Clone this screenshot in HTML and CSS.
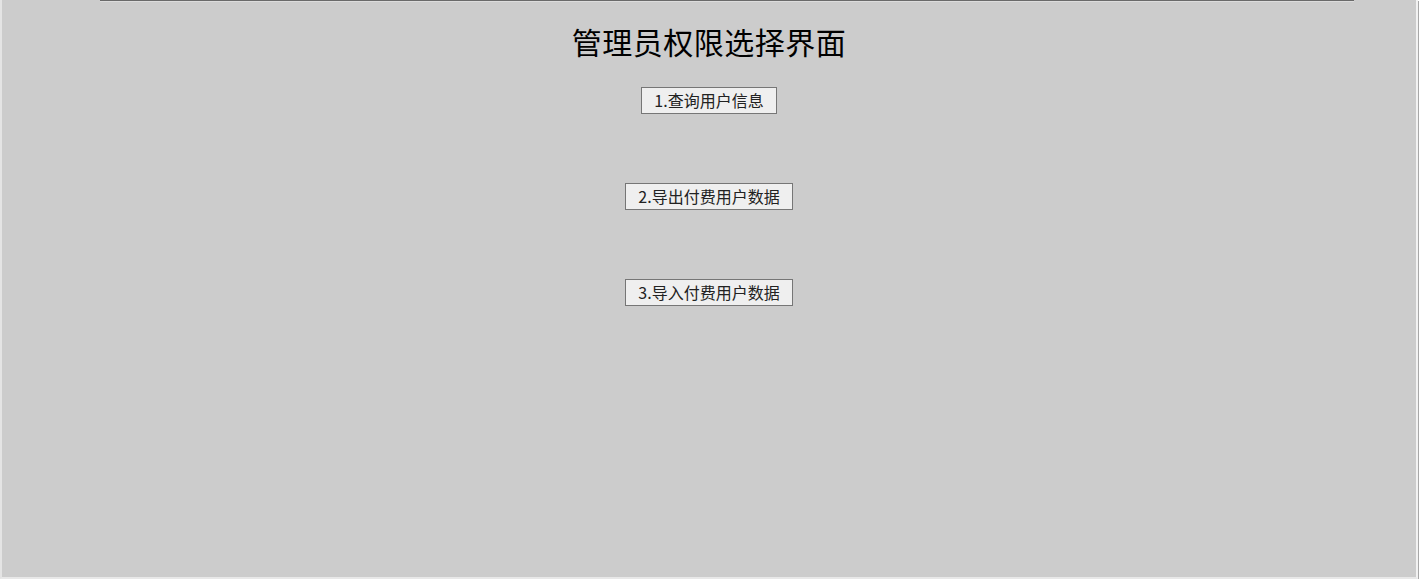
FILE: index.html
```html
<!DOCTYPE html>
<html lang="zh">
<head>
<meta charset="utf-8">
<title>管理员权限选择界面</title>
<link rel="stylesheet" href="styles.css">
</head>
<body>
<div class="frame">
  <div class="topline"></div>
  <main class="panel">
    <h1 class="title">管理员权限选择界面</h1>
    <div class="actions">
      <button class="btn" type="button">1.查询用户信息</button>
      <button class="btn" type="button">2.导出付费用户数据</button>
      <button class="btn" type="button">3.导入付费用户数据</button>
    </div>
  </main>
</div>
</body>
</html>
```
FILE: styles.css
```css
html, body {
  margin: 0;
  padding: 0;
  background: #ffffff;
}
.frame {
  width: 1414px;
  height: 577px;
  background: #cccccc;
  border-left: 2px solid #e4e4e4;
  border-right: 2px solid #f2f2f2;
  border-bottom: 2px solid #e8e8e8;
  box-shadow: 1px 1px 0 #a8a8a8;
  display: flex;
  flex-direction: column;
}
.topline {
  height: 1px;
  margin-left: 98px;
  width: 1254px;
  background: #6a6a6a;
  border-bottom: 1px solid #dcdcdc;
}
.panel {
  display: flex;
  flex-direction: column;
  align-items: center;
}
.title {
  margin: 23px 0 0 0;
  font-family: "Noto Sans CJK SC", sans-serif;
  font-weight: 400;
  font-size: 30px;
  line-height: 32px;
  letter-spacing: 0.5px;
  color: #000000;
}
.actions {
  margin-top: 30px;
  display: flex;
  flex-direction: column;
  align-items: center;
  gap: 69px;
}
.btn {
  height: 27px;
  padding: 0 12px;
  font-family: "Noto Sans CJK SC", sans-serif;
  font-size: 16px;
  line-height: 25px;
  color: #222222;
  background: #efefef;
  border: 1px solid #767676;
  border-radius: 0;
}
```
